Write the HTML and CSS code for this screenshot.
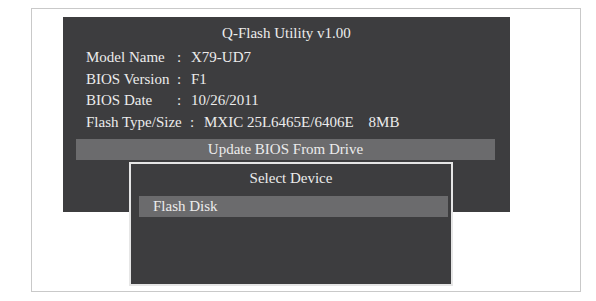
FILE: index.html
```html
<!DOCTYPE html>
<html>
<head>
<meta charset="utf-8">
<link rel="stylesheet" href="styles.css">
</head>
<body>
<div class="frame">
  <div class="panel">
    <div class="title">Q-Flash Utility v1.00</div>
    <div class="rows">
      <div class="row"><span class="label">Model Name</span><span class="colon">:</span><span class="value">X79-UD7</span></div>
      <div class="row"><span class="label">BIOS Version</span><span class="colon">:</span><span class="value">F1</span></div>
      <div class="row"><span class="label">BIOS Date</span><span class="colon">:</span><span class="value">10/26/2011</span></div>
      <div class="row"><span class="label wide">Flash Type/Size</span><span class="colon">:</span><span class="value">MXIC 25L6465E/6406E<span class="size">8MB</span></span></div>
    </div>
    <div class="bar">Update BIOS From Drive</div>
    <div class="dialog">
      <div class="dialog-title">Select Device</div>
      <div class="item">Flash Disk</div>
    </div>
  </div>
</div>
</body>
</html>
```
FILE: styles.css
```css
html, body {
  margin: 0;
  padding: 0;
  background: #ffffff;
}
body {
  width: 596px;
  height: 301px;
  overflow: hidden;
  font-family: "Liberation Serif", "Times New Roman", serif;
  color: #ececec;
}
.frame {
  margin: 8px 0 0 31px;
  width: 548px;
  height: 282px;
  border: 1px solid #c9c9c9;
  box-sizing: content-box;
}
.panel {
  position: relative;
  margin: 8px 0 0 31px;
  width: 447px;
  height: 195px;
  background: #3d3d3f;
  box-sizing: border-box;
  padding: 0 15px 0 13px;
}
.title {
  text-align: center;
  font-size: 15px;
  line-height: 20px;
  padding-top: 6px;
  padding-left: 2px;
}
.rows {
  padding: 4px 0 0 10px;
}
.row {
  display: flex;
  font-size: 15px;
  line-height: 21.5px;
  white-space: nowrap;
}
.label {
  width: 91px;
}
.label.wide {
  width: 104px;
}
.colon {
  width: 14px;
}
.size {
  margin-left: 15px;
}
.bar {
  margin-top: 6px;
  height: 21px;
  background: #6b6b6d;
  text-align: center;
  font-size: 15px;
  line-height: 21px;
}
.dialog {
  position: absolute;
  left: 66px;
  top: 145px;
  width: 324px;
  height: 124px;
  box-sizing: border-box;
  border: 2px solid #e6e6e6;
  background: #3d3d3f;
  padding: 32px 3px 0 8px;
}
.dialog-title {
  position: absolute;
  left: 0;
  right: 0;
  top: 4px;
  text-align: center;
  font-size: 15px;
  line-height: 20px;
}
.item {
  height: 21px;
  background: #6b6b6d;
  font-size: 15px;
  line-height: 21px;
  padding-left: 14px;
}
```
